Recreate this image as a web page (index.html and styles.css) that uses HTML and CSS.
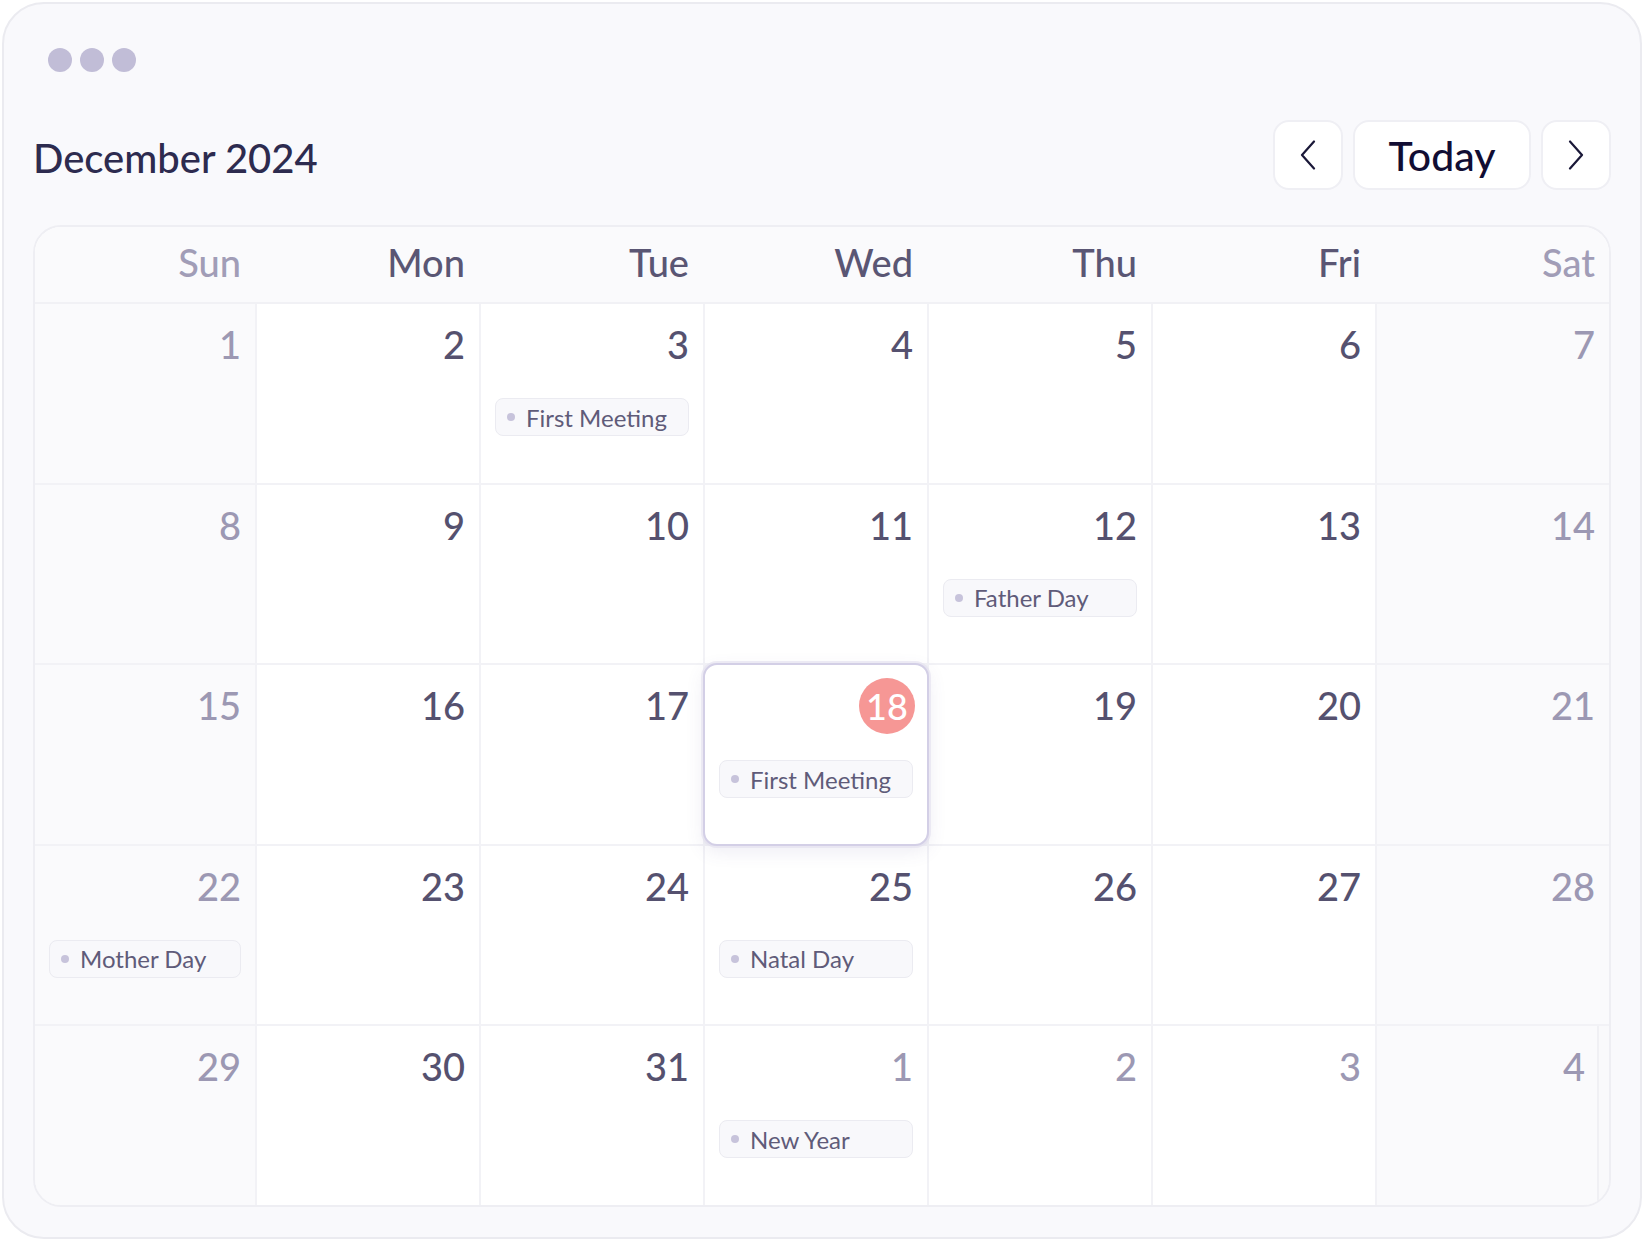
FILE: index.html
```html
<!DOCTYPE html>
<html>
  <head>
    <meta charset="utf-8" />
    <meta name="viewport" content="width=device-width, initial-scale=1" />
    <link rel="stylesheet" href="styles.css">
  </head>
  <body>
    <div class="frame">
      <div class="dots">
        <span></span><span></span><span></span>
      </div>

      <div class="toolbar">
        <div class="month-title">December 2024</div>
        <div class="nav">
          <button class="nav-btn icon" aria-label="Previous month">
            <svg width="16" height="30" viewBox="0 0 16 30" fill="none">
              <path d="M14 1.5 L2 15 L14 28.5" stroke="#1a1838" stroke-width="2.2" stroke-linecap="round" stroke-linejoin="round" />
            </svg>
          </button>
          <button class="nav-btn today-btn">Today</button>
          <button class="nav-btn icon" aria-label="Next month">
            <svg width="16" height="30" viewBox="0 0 16 30" fill="none">
              <path d="M2 1.5 L14 15 L2 28.5" stroke="#1a1838" stroke-width="2.2" stroke-linecap="round" stroke-linejoin="round" />
            </svg>
          </button>
        </div>
      </div>

      <div class="calendar">
        <div class="weekdays">
          <div class="wd weekend">Sun</div>
          <div class="wd">Mon</div>
          <div class="wd">Tue</div>
          <div class="wd">Wed</div>
          <div class="wd">Thu</div>
          <div class="wd">Fri</div>
          <div class="wd weekend">Sat</div>
        </div>

        <div class="days">
          <!-- week 1 -->
          <div class="day weekend"><div class="num">1</div></div>
          <div class="day"><div class="num">2</div></div>
          <div class="day">
            <div class="num">3</div>
            <div class="event"><i></i>First Meeting</div>
          </div>
          <div class="day"><div class="num">4</div></div>
          <div class="day"><div class="num">5</div></div>
          <div class="day"><div class="num">6</div></div>
          <div class="day weekend"><div class="num">7</div></div>

          <!-- week 2 -->
          <div class="day weekend"><div class="num">8</div></div>
          <div class="day"><div class="num">9</div></div>
          <div class="day"><div class="num">10</div></div>
          <div class="day"><div class="num">11</div></div>
          <div class="day">
            <div class="num">12</div>
            <div class="event"><i></i>Father Day</div>
          </div>
          <div class="day"><div class="num">13</div></div>
          <div class="day weekend"><div class="num">14</div></div>

          <!-- week 3 -->
          <div class="day weekend"><div class="num">15</div></div>
          <div class="day"><div class="num">16</div></div>
          <div class="day"><div class="num">17</div></div>
          <div class="day today">
            <div class="num"><span>18</span></div>
            <div class="event"><i></i>First Meeting</div>
          </div>
          <div class="day"><div class="num">19</div></div>
          <div class="day"><div class="num">20</div></div>
          <div class="day weekend"><div class="num">21</div></div>

          <!-- week 4 -->
          <div class="day weekend">
            <div class="num">22</div>
            <div class="event"><i></i>Mother Day</div>
          </div>
          <div class="day"><div class="num">23</div></div>
          <div class="day"><div class="num">24</div></div>
          <div class="day">
            <div class="num">25</div>
            <div class="event"><i></i>Natal Day</div>
          </div>
          <div class="day"><div class="num">26</div></div>
          <div class="day"><div class="num">27</div></div>
          <div class="day weekend"><div class="num">28</div></div>

          <!-- week 5 -->
          <div class="day weekend"><div class="num">29</div></div>
          <div class="day"><div class="num">30</div></div>
          <div class="day"><div class="num">31</div></div>
          <div class="day outside">
            <div class="num">1</div>
            <div class="event"><i></i>New Year</div>
          </div>
          <div class="day outside"><div class="num">2</div></div>
          <div class="day outside"><div class="num">3</div></div>
          <div class="day weekend outside short"><div class="num">4</div></div>
        </div>
      </div>
    </div>
  </body>
</html>
```

FILE: styles.css
```css
html,
body,
div {
  margin: 0;
  padding: 0;
  box-sizing: border-box;
}

body {
  background: #ffffff;
  padding: 2px;
  font-family: "Lato", "Noto Sans", sans-serif;
}

.frame {
  height: 1237px;
  border: 2px solid #ebebf0;
  border-radius: 42px;
  background-color: #f9f9fc;
  padding: 44px 29px 30px;
}

/* window dots */
.dots {
  display: flex;
  gap: 8px;
  padding-left: 15px;
}
.dots span {
  width: 24px;
  height: 24px;
  border-radius: 50%;
  background-color: #c1bdd7;
}

/* month title + navigation */
.toolbar {
  display: flex;
  align-items: center;
  justify-content: space-between;
  height: 70px;
  margin-top: 48px;
}
.month-title {
  padding-top: 6px;
  font-size: 40px;
  font-weight: 500;
  color: #2d2b4f;
}
.nav {
  display: flex;
  gap: 10px;
}
.nav-btn {
  height: 70px;
  border: 2px solid #efeff4;
  border-radius: 16px;
  background-color: #ffffff;
  font-family: inherit;
  cursor: pointer;
}
.nav-btn.icon {
  width: 70px;
  display: flex;
  align-items: center;
  justify-content: center;
}
.today-btn {
  width: 178px;
  font-size: 41px;
  font-weight: 500;
  color: #110d33;
}

/* calendar grid */
.calendar {
  display: flex;
  flex-direction: column;
  height: 982px;
  margin-top: 35px;
  border: 2px solid #eeeef3;
  border-radius: 28px;
  overflow: hidden;
  background-color: #ffffff;
}
.weekdays {
  display: grid;
  grid-template-columns: 220px repeat(5, 222px) 1fr;
  column-gap: 2px;
  height: 77px;
  padding-top: 12px;
  border-bottom: 2px solid #f1f1f5;
  background-color: #fafafc;
}
.wd {
  text-align: right;
  padding-right: 14px;
  font-size: 38px;
  font-weight: 500;
  color: #5a5674;
}
.wd.weekend {
  color: #a19db7;
}

.days {
  flex: 1;
  display: grid;
  grid-template-columns: 220px repeat(5, 222px) 1fr;
  grid-template-rows: repeat(5, 1fr);
  gap: 2px;
  background-color: #f2f2f6;
}
.day {
  background-color: #ffffff;
  padding: 17px 14px 0;
}
.day.weekend {
  background-color: #fafafc;
}
/* last cell stops short of the edge */
.day.short {
  background: linear-gradient(to left, #f9f9fb 10px, #f0f0f4 10px 12px, #fafafc 12px);
  padding-right: 24px;
}
.num {
  display: flex;
  align-items: center;
  justify-content: flex-end;
  height: 46px;
  font-size: 38px;
  font-weight: 500;
  color: #55516f;
}
.day.weekend .num,
.day.outside .num {
  color: #9c98b3;
}

.day.today {
  position: relative;
  z-index: 1;
  margin: -2px;
  border: 2px solid #d3cfe6;
  border-radius: 14px;
  padding: 18px 14px 0;
  box-shadow: 0 0 0 2px rgba(226, 224, 238, 0.6), 0 6px 18px rgba(90, 80, 150, 0.1);
}
.day.today .num span {
  display: flex;
  align-items: center;
  justify-content: center;
  width: 56px;
  height: 56px;
  margin-right: -2px;
  border-radius: 50%;
  background-color: #f69795;
  color: #ffffff;
  font-size: 36px;
}

.event {
  display: flex;
  align-items: center;
  gap: 11px;
  height: 38px;
  margin-top: 31px;
  padding-left: 11px;
  border: 1px solid #ebebf1;
  border-radius: 8px;
  background-color: #f8f8fb;
  font-size: 24px;
  color: #5f5b79;
}
.event i {
  width: 8px;
  height: 8px;
  border-radius: 50%;
  background-color: #c7c3db;
}
```
